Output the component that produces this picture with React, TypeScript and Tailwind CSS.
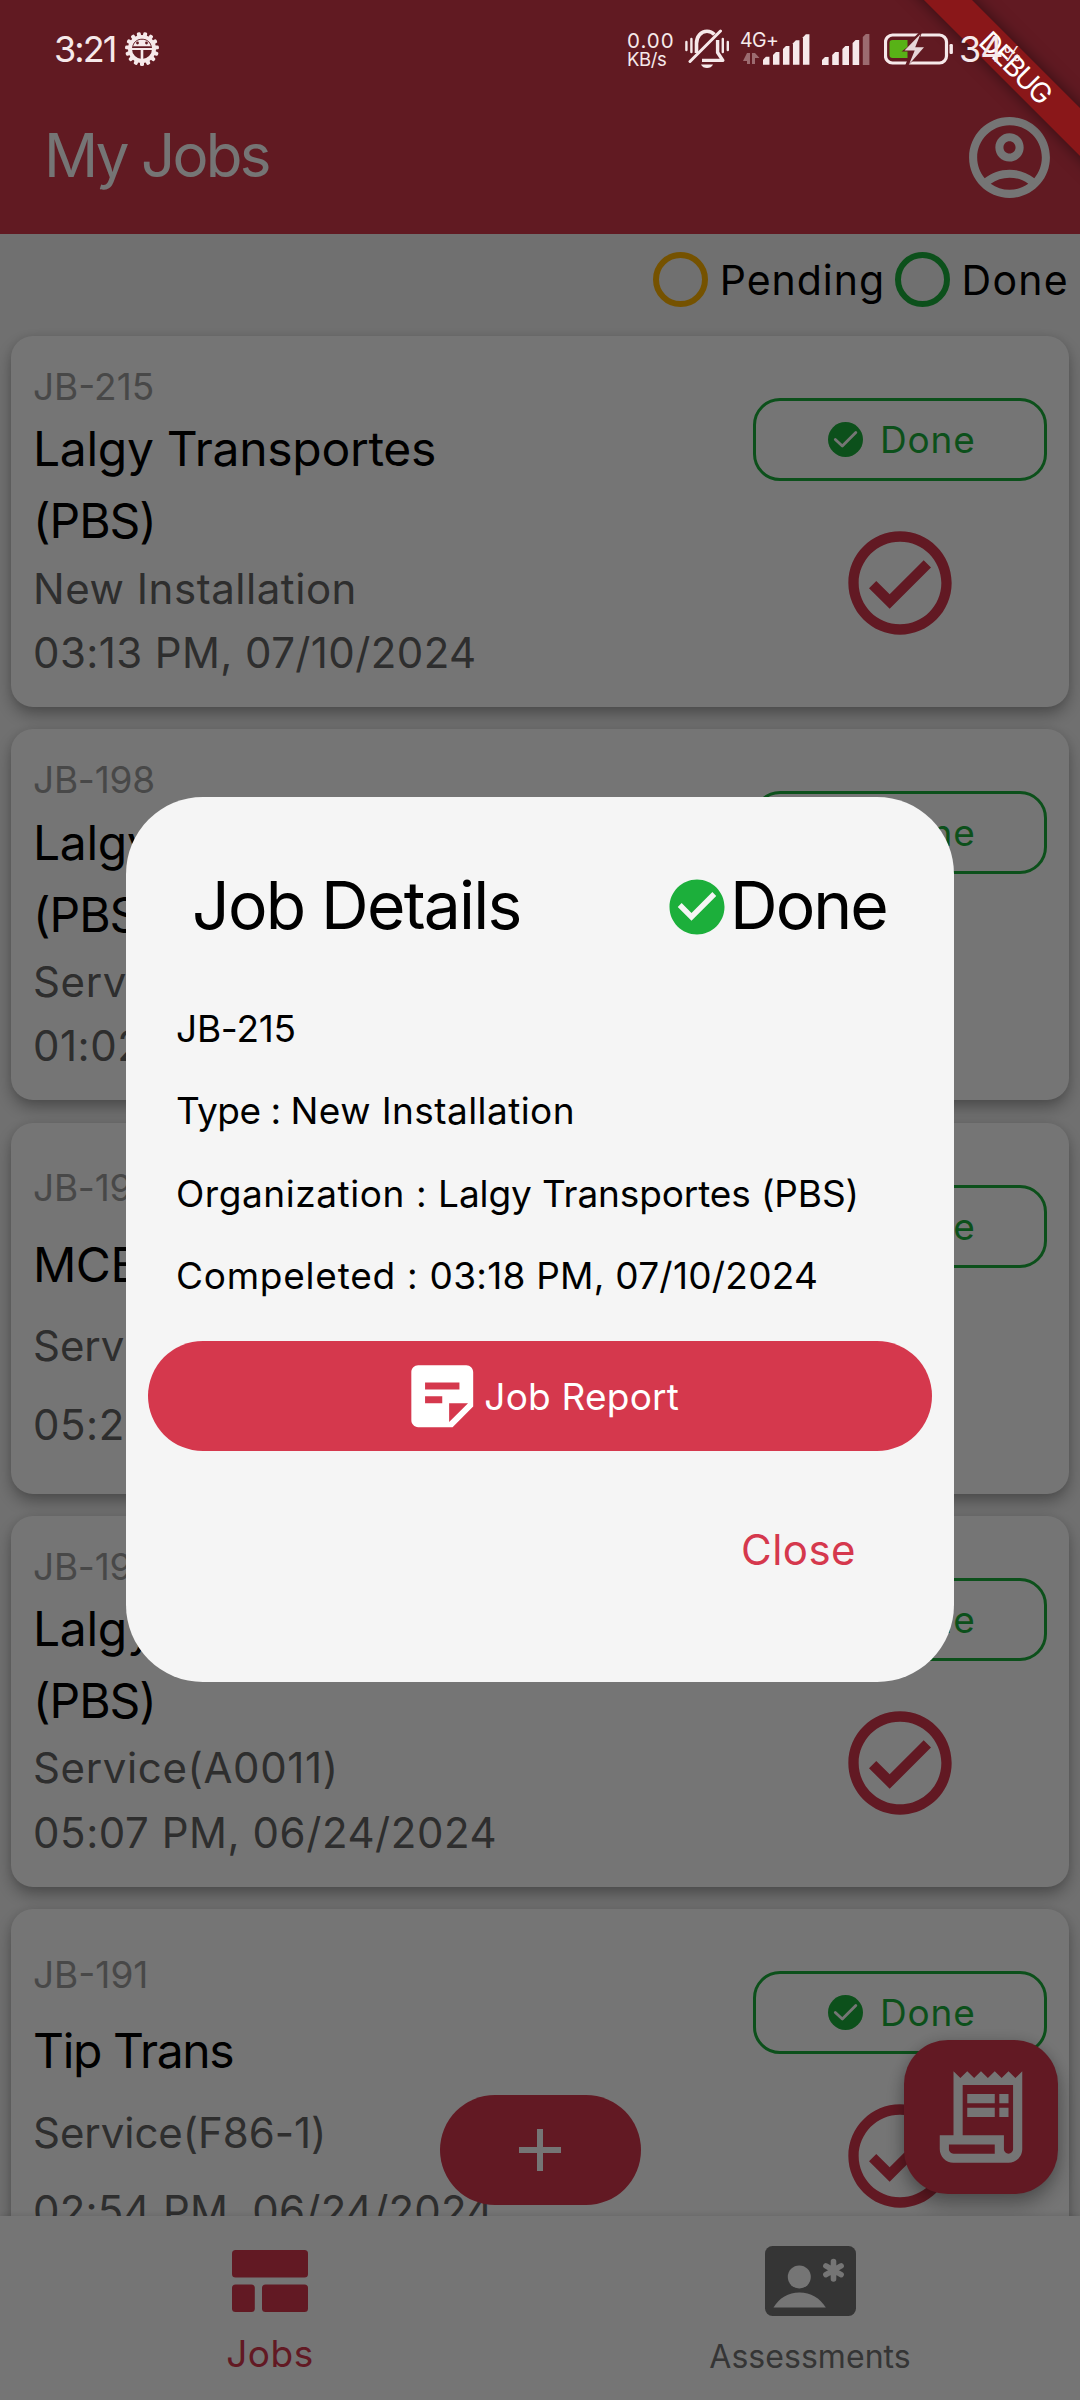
import React from "react";

type Job = { id: string; idTracking: string; title: string[]; type: string; time: string; timeTracking: string };

const jobs: Job[] = [
  { id: "JB-215", idTracking: "tracking-[0px]", title: ["Lalgy Transportes", "(PBS)"], type: "New Installation", time: "03:13 PM, 07/10/2024", timeTracking: "tracking-[0.4px]" },
  { id: "JB-198", idTracking: "tracking-[-0.24px]", title: ["Lalgy Transportes", "(PBS)"], type: "Service(A0011)", time: "01:02 PM, 07/01/2024", timeTracking: "tracking-[0.5px]" },
  { id: "JB-197", idTracking: "tracking-[-0.24px]", title: ["MCB"], type: "Service(F86-1)", time: "05:23 PM, 06/24/2024", timeTracking: "tracking-[0.5px]" },
  { id: "JB-192", idTracking: "tracking-[-0.24px]", title: ["Lalgy Transportes", "(PBS)"], type: "Service(A0011)", time: "05:07 PM, 06/24/2024", timeTracking: "tracking-[0.55px]" },
  { id: "JB-191", idTracking: "tracking-[0px]", title: ["Tip Trans"], type: "Service(F86-1)", time: "02:54 PM, 06/24/2024", timeTracking: "tracking-[0.2px]" },
];

const titleTracking: Record<string, string> = {
  "Lalgy Transportes": "tracking-[-0.3px]",
  "(PBS)": "tracking-[-1px]",
  MCB: "tracking-[-0.5px]",
  "Tip Trans": "tracking-[-1.35px]",
};

const typeTracking: Record<string, string> = {
  "New Installation": "tracking-[0.55px]",
  "Service(A0011)": "tracking-[0.62px]",
  "Service(F86-1)": "tracking-[-0.05px]",
};

function DebugBanner() {
  return (
    <div className="absolute top-0 right-0 w-[220px] h-[220px] overflow-hidden">
      <div className="absolute left-[-6px] top-[49px] w-[320px] h-[34px] rotate-45 bg-[#8a1719] shadow-[0_0_16px_rgba(0,0,0,0.5)] flex items-center justify-center">
        <span className="pl-[4px] text-white text-[28px] leading-none tracking-[-1.9px]">DEBUG</span>
      </div>
    </div>
  );
}

function GearIcon() {
  const teeth = Array.from({ length: 15 }, (_, i) => i * 24 + 12);
  return (
    <svg className="ml-px w-[34px] h-[36px]" viewBox="-17 -18 34 36">
      {teeth.map((a) => (
        <rect key={a} x="-2" y="-17" width="4" height="5" rx="1.5" fill="#f6e9ea" transform={`rotate(${a})`} />
      ))}
      <circle r="12" fill="none" stroke="#f6e9ea" strokeWidth="4" />
      <path d="M-9.600-2.600A10 10 0 0 1 9.600-2.600z" fill="#f6e9ea" />
      <path d="M-9-3.200C-8-7.500-4-9.800 0-9.800S8-7.500 9-3.200" fill="none" stroke="#611b22" strokeWidth="0.900" />
      <circle cx="-4.500" cy="-6" r="1.400" fill="#611b22" />
      <circle cx="4.500" cy="-6" r="1.400" fill="#611b22" />
      <path d="M-11 0H11" stroke="#f6e9ea" strokeWidth="2" />
      <path d="M0 0V12" stroke="#f6e9ea" strokeWidth="2.600" />
      <path d="M-10-1.900H10" stroke="#611b22" strokeWidth="1.200" />
    </svg>
  );
}

function MutedBellIcon() {
  return (
    <svg className="w-[44px] h-[40px]" viewBox="0 0 44 40" fill="none" stroke="#f6e9ea">
      <path d="M11.500 24V14.500C11.500 7.500 16 2.300 22 2.300c3 0 5.600 1.200 7.400 3.200" strokeWidth="3.600" />
      <path d="M32.600 11v12.500l5.200 7.900H17" strokeWidth="3.400" strokeLinejoin="round" />
      <path d="M5 32.500L35.500 2" strokeWidth="3" strokeLinecap="round" />
      <path d="M16 35.500h12c-1 2.400-3.400 3.600-6 3.600s-5-1.200-6-3.600z" fill="#f6e9ea" stroke="none" />
      <path d="M1.400 13v8M6.400 10v13M37.800 10v13M42.800 13v8" strokeWidth="2.400" strokeLinecap="round" />
    </svg>
  );
}

function SignalBars({ dimLast = false }: { dimLast?: boolean }) {
  const bars = [8, 13, 19, 25, 31];
  return (
    <svg className="w-[48px] h-[31px]" viewBox="0 0 48 31">
      {bars.map((h, i) => (
        <path
          key={h}
          d={`M${i * 10.2} 31V${31 - h + 3}l3-3h3.600V31z`}
          fill={dimLast && i === 4 ? "#9c6b70" : "#f6e9ea"}
        />
      ))}
    </svg>
  );
}

function BatteryIcon() {
  return (
    <svg className="w-[70px] h-[32px]" viewBox="0 0 70 32">
      <rect x="1.500" y="2" width="61" height="28" rx="7" fill="none" stroke="#f6e9ea" strokeWidth="3.200" />
      <rect x="65.500" y="11" width="3.400" height="10" rx="1.200" fill="#f6e9ea" />
      <path d="M37-1L17 18.500h11L22 33l20-19H31.500z" fill="#611b22" stroke="#611b22" strokeWidth="2" />
      <path d="M8.500 7h15v7l-6 4.500h6V25h-15a3 3 0 0 1-3-3V10a3 3 0 0 1 3-3z" fill="#58b217" />
      <path d="M36.500 1L20.500 17.500h10.200L25 31.500 40 14.200H31.200z" fill="#e6d6d8" />
    </svg>
  );
}

function StatusBar() {
  return (
    <div className="absolute top-0 left-0 w-full h-[98px] flex items-center text-[#f6e9ea]">
      <span className="ml-[54px] w-[70px] text-[36px] leading-none tracking-[-1.95px]">3:21</span>
      <GearIcon />
      <div className="ml-auto w-[453px] flex items-center">
        <div className="w-[58px] flex flex-col pt-px">
          <span className="text-[20.5px] leading-[19px] tracking-[1px]">0.00</span>
          <span className="text-[18.5px] leading-[18px] tracking-[-0.4px]">KB/s</span>
        </div>
        <MutedBellIcon />
        <div className="relative ml-[12px] w-[69px] flex justify-end pl-[22px]">
          <span className="absolute left-[-1px] top-[-3px] text-[19.5px] leading-none tracking-[-0.57px]">4G+</span>
          <svg className="absolute left-[2px] top-[19px] w-[17px] h-[12px]" viewBox="0 0 17 12" fill="#9c6b70">
            <path d="M4 0h3v11H4V8H0zM9 0h3l4.500 5H12v6H9z" />
          </svg>
          <SignalBars />
        </div>
        <div className="ml-[12px] w-[48px]">
          <SignalBars dimLast />
        </div>
        <div className="ml-[14px] w-[70px] shrink-0">
          <BatteryIcon />
        </div>
        <span className="ml-[5px] text-[36px] leading-none tracking-[-1px]">34</span>
        <span className="mt-[9px] text-[20px] leading-none">%</span>
      </div>
    </div>
  );
}

function AccountIcon() {
  return (
    <svg className="w-[97px] h-[97px]" viewBox="0 0 24 24" fill="white">
      <path d="M12 2C6.48 2 2 6.48 2 12s4.480 10 10 10 10-4.480 10-10S17.520 2 12 2zM7.350 18.500C8.660 17.560 10.260 17 12 17s3.340.56 4.650 1.500C15.340 19.440 13.740 20 12 20s-3.340-.56-4.650-1.500zm10.790-1.380C16.450 15.800 14.320 15 12 15s-4.450.8-6.140 2.120C4.700 15.730 4 13.950 4 12c0-4.420 3.580-8 8-8s8 3.580 8 8c0 1.950-.7 3.730-1.860 5.120z" />
      <path d="M12 6c-1.930 0-3.500 1.570-3.500 3.500S10.070 13 12 13s3.500-1.570 3.500-3.500S13.930 6 12 6zm0 5c-.83 0-1.500-.67-1.500-1.500S11.170 8 12 8s1.500.67 1.500 1.500S12.830 11 12 11z" />
    </svg>
  );
}

function JobCard({ job }: { job: Job }) {
  return (
    <div className="shrink-0 h-[371px] mb-[22.25px] mx-[11px] rounded-[22px] bg-white shadow-[0_8px_16px_-1px_rgba(0,0,0,0.32),0_0_8px_rgba(0,0,0,0.07)] flex">
      <div className="flex-1 pl-[22px] pt-[25px] pb-[22px] flex flex-col justify-evenly whitespace-nowrap">
        <div className={`h-[51px] leading-[51px] text-[37px] text-[#9e9e9e] ${job.idTracking}`}>{job.id}</div>
        <div className="pt-px -mb-px text-[48px] leading-[72px] text-black">
          {job.title.map((line) => (
            <div key={line} className={titleTracking[line]}>{line}</div>
          ))}
        </div>
        <div className={`text-[42px] leading-[64px] text-[#646464] ${typeTracking[job.type]}`}>{job.type}</div>
        <div className={`text-[42px] leading-[64px] text-[#646464] ${job.timeTracking}`}>{job.time}</div>
      </div>
      <div className="w-[294px] mr-[22px] pt-[62px] flex flex-col items-center">
        <div className="w-full h-[83px] rounded-[27px] border-[3px] border-[#1caf3b] flex items-center pl-[72px] text-[#1caf3b]">
          <svg className="w-[35px] h-[35px]" viewBox="0 0 35 35">
            <circle cx="17.500" cy="17.500" r="17.500" fill="#1caf3b" />
            <path d="M7.300 17.500l7 6.500L27.800 10.500" fill="none" stroke="white" strokeWidth="2.800" strokeLinecap="round" strokeLinejoin="round" />
          </svg>
          <span className="ml-[17px] text-[37px] leading-none tracking-[0.8px]">Done</span>
        </div>
        <svg className="mt-[40px] w-[124px] h-[124px]" viewBox="0 0 24 24" fill="#d5384d">
          <path d="M12 2C6.480 2 2 6.480 2 12s4.480 10 10 10 10-4.480 10-10S17.520 2 12 2zm0 18c-4.410 0-8-3.590-8-8s3.590-8 8-8 8 3.590 8 8-3.590 8-8 8z" />
          <path d="M16.590 7.580L10 14.170l-2.590-2.580L6 13l4 4 8-8z" />
        </svg>
      </div>
    </div>
  );
}

function FloatingButtons() {
  return (
    <>
      <div className="absolute left-[439.5px] bottom-[11px] w-[201px] h-[110px] rounded-full bg-[#d5384d] flex items-center justify-center">
        <svg className="w-[42px] h-[42px]" viewBox="0 0 42 42">
          <path d="M0 21H42M21 0V42" stroke="white" strokeWidth="6" />
        </svg>
      </div>
      <div className="absolute left-[904px] bottom-[22px] w-[154px] h-[154px] rounded-[44px] bg-[#d5384d] shadow-[0_12px_20px_rgba(0,0,0,0.28),0_0_14px_rgba(0,0,0,0.15)] flex items-center justify-center">
        <svg className="w-[110px] h-[110px]" viewBox="0 0 24 24" fill="white">
          <path d="M19.500 3.500 18 2l-1.500 1.500L15 2l-1.500 1.500L12 2l-1.500 1.500L9 2 7.500 3.500 6 2v14H3v3c0 1.660 1.340 3 3 3h12c1.660 0 3-1.340 3-3V2l-1.500 1.500zM15 20H6c-.55 0-1-.45-1-1v-1h10v2zm4-1c0 .55-.45 1-1 1s-1-.45-1-1v-3H8V5h11v14z" />
          <path d="M9 7h6v2H9zM16 7h2v2h-2zM9 10h6v2H9zM16 10h2v2h-2z" />
        </svg>
      </div>
    </>
  );
}

function BottomNav() {
  return (
    <div className="relative h-[184px] shrink-0 bg-white shadow-[0_-1px_6px_rgba(0,0,0,0.12)] flex pt-[23px]">
      <div className="flex-1 flex flex-col items-center text-[#d5384d]">
        <div className="h-[82px] pt-[2px] flex items-center">
          <svg className="w-[76px] h-[62px]" viewBox="0 0 76 62" fill="#d5384d">
            <rect width="76" height="27.500" rx="3.500" />
            <rect y="34.500" width="22.800" height="27.500" rx="3.500" />
            <rect x="30" y="34.500" width="46" height="27.500" rx="3.500" />
          </svg>
        </div>
        <span className="text-[37px] leading-[66px] tracking-[0.51px]">Jobs</span>
      </div>
      <div className="flex-1 flex flex-col items-center text-[#757575]">
        <div className="h-[82px] pt-[2px] flex items-center">
          <svg className="w-[91px] h-[70px]" viewBox="0 0 91 70">
            <rect width="91" height="70" rx="7.500" fill="#757575" />
            <circle cx="34.300" cy="31" r="11.500" fill="white" />
            <path d="M8.500 61.500C14 52 23.500 46.500 34.500 46.500S55 52 60.800 61.500z" fill="white" />
            <path d="M68.500 15.500v17.500M60.900 19.900l15.200 8.700M60.900 28.600l15.200-8.700" stroke="white" strokeWidth="5.600" strokeLinecap="round" />
          </svg>
        </div>
        <span className="pt-[3px] text-[32px] leading-[66px] tracking-[0.05px]">Assessments</span>
      </div>
    </div>
  );
}

function JobDialog() {
  return (
    <div className="absolute inset-0 bg-black/54 flex flex-col items-center">
      <div className="mt-[797px] w-[828px] h-[885px] rounded-[77px] bg-[#f5f5f5] flex flex-col text-black whitespace-nowrap">
        <div className="mt-[64px] h-[88px] pl-[66px] flex items-center justify-between text-[66px] leading-[88px]">
          <span className="tracking-[-1.78px]">Job Details</span>
          <div className="w-[290px] flex items-center">
            <svg className="mt-[3px] w-[66px] h-[66px]" viewBox="0 0 24 24" fill="#1caf3b">
              <path d="M12 2C6.480 2 2 6.480 2 12s4.480 10 10 10 10-4.480 10-10S17.520 2 12 2zm-2 15l-5-5 1.410-1.410L10 14.170l7.590-7.590L19 8l-9 9z" />
            </svg>
            <span className="tracking-[-2px]">Done</span>
          </div>
        </div>
        <div className="mt-[39px] pl-[50px] text-[37px] leading-[82.25px]">
          <div className="tracking-[-0.24px]">JB-215</div>
          <div>
            <span className="tracking-[-0.5px]">Type : </span>
            <span className="tracking-[0.42px]">New Installation</span>
          </div>
          <div>
            <span className="tracking-[0.56px]">Organization : </span>
            <span className="tracking-[-0.12px]">Lalgy Transportes (PBS)</span>
          </div>
          <div>
            <span className="tracking-[0.75px]">Compeleted : </span>
            <span className="tracking-[0.24px]">03:18 PM, 07/10/2024</span>
          </div>
        </div>
        <div className="mt-[24px] mx-[22px] h-[110px] rounded-full bg-[#d5384d] flex items-center justify-center text-white">
          <svg className="w-[82.5px] h-[82.5px]" viewBox="0 0 24 24" fill="white">
            <path d="M19 3H4.990C3.890 3 3 3.900 3 5l.01 14c0 1.100.89 2 1.990 2h10l6-6V5c0-1.100-.9-2-2-2zM7 8h10v2H7V8zm5 6H7v-2h5v2zm2 5.500V14h5.500L14 19.500z" />
          </svg>
          <span className="ml-[1px] text-[37px] leading-none tracking-[0.22px]">Job Report</span>
        </div>
        <div className="mt-[44px] h-[110px] pr-[98px] flex items-center justify-end">
          <span className="text-[42px] leading-none tracking-[0.45px] text-[#d5384d]">Close</span>
        </div>
      </div>
    </div>
  );
}

export default function App() {
  return (
    <div className="relative w-[1080px] h-[2400px] overflow-hidden bg-[#f3f3f3] font-['Inter','Liberation_Sans',sans-serif] flex flex-col">
      <header className="h-[234px] shrink-0 bg-[#d43a4b] pt-[80px] pl-[44px] pr-[22px] flex items-center justify-between">
        <span className="mb-[5px] text-[60px] leading-none tracking-[-2.71px] text-white">My Jobs</span>
        <AccountIcon />
      </header>
      <div className="h-[102px] shrink-0 pb-[11px] pr-[11px] flex items-center justify-end text-[41px] leading-none text-black">
        <div className="w-[55px] h-[55px] rounded-full border-[6px] border-[#ffb300]" />
        <span className="ml-[11.5px] pt-px tracking-[0.95px]">Pending</span>
        <div className="ml-[10px] w-[55px] h-[55px] rounded-full border-[6px] border-[#1caf3b]" />
        <span className="ml-[11.5px] pt-px tracking-[1.3px]">Done</span>
      </div>
      <div className="relative flex-1 min-h-0">
        <div className="absolute inset-x-0 -top-[20px] bottom-0 pt-[20px] overflow-hidden flex flex-col">
          {jobs.map((job) => (
            <JobCard key={job.id} job={job} />
          ))}
        </div>
        <FloatingButtons />
      </div>
      <BottomNav />
      <JobDialog />
      <DebugBanner />
      <StatusBar />
    </div>
  );
}
